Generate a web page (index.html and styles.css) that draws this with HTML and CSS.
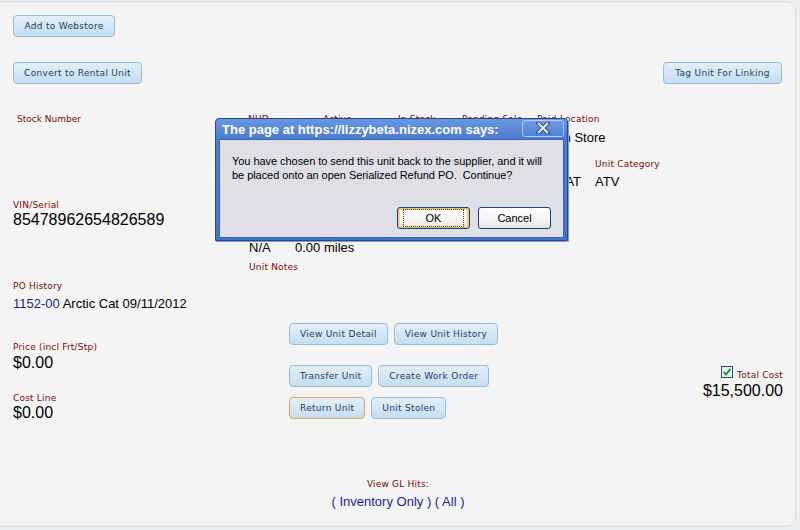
FILE: index.html
```html
<!DOCTYPE html>
<html lang="en">
<head>
<meta charset="UTF-8">
<title>Unit Detail</title>
<link rel="stylesheet" href="styles.css">
</head>
<body>

<div class="panel">
    <div class="row-top">
        <button class="btn">Add to Webstore</button>
    </div>

    <div class="row-tools">
        <button class="btn">Convert to Rental Unit</button>
        <button class="btn">Tag Unit For Linking</button>
    </div>

    <div class="main">
        <div class="col-left">
            <div class="lbl stock-lbl">Stock Number</div>
            <div class="lbl vin-lbl">VIN/Serial</div>
            <div class="big">85478962654826589</div>
            <div class="lbl po-lbl">PO History</div>
            <div class="val"><a class="link" href="#">1152-00</a> Arctic Cat 09/11/2012</div>
            <div class="lbl price-lbl">Price (incl Frt/Stp)</div>
            <div class="big">$0.00</div>
            <div class="lbl cost-lbl">Cost Line</div>
            <div class="big">$0.00</div>
        </div>

        <div class="col-mid">
            <!-- most of these cells sit under the alert box -->
            <div class="info info-1">
                <div class="lbl">NUD</div>
                <div class="lbl">Active</div>
                <div class="lbl">In Stock</div>
                <div class="lbl">Pending Sale</div>
                <div class="lbl">Paid</div>
                <div class="lbl">Location</div>
                <div class="val"></div>
                <div class="val"></div>
                <div class="val"></div>
                <div class="val"></div>
                <div class="val"></div>
                <div class="val">In Store</div>
            </div>

            <div class="info info-2">
                <div class="lbl"></div>
                <div class="lbl"></div>
                <div class="lbl"></div>
                <div class="lbl"></div>
                <div class="lbl">Unit Category</div>
                <div class="val"></div>
                <div class="val"></div>
                <div class="val"></div>
                <div class="val">ARCTIC CAT</div>
                <div class="val">ATV</div>
            </div>

            <div class="info info-3">
                <div class="lbl"></div>
                <div class="lbl"></div>
                <div class="val">N/A</div>
                <div class="val">0.00 miles</div>
            </div>

            <div class="lbl notes-lbl">Unit Notes</div>

            <div class="actions">
                <div class="btn-row">
                    <button class="btn">View Unit Detail</button>
                    <button class="btn">View Unit History</button>
                </div>
                <div class="btn-row row-2">
                    <button class="btn">Transfer Unit</button>
                    <button class="btn">Create Work Order</button>
                </div>
                <div class="btn-row row-3">
                    <button class="btn btn-focus">Return Unit</button>
                    <button class="btn">Unit Stolen</button>
                </div>
            </div>
        </div>

        <div class="col-right">
            <div class="total-head">
                <span class="check">
                    <svg width="10" height="10" viewBox="0 0 10 10"><path d="M1.5 5 L4 7.5 L8.5 2" fill="none" stroke="#2f9a2f" stroke-width="2"/></svg>
                </span>
                <span class="lbl">Total Cost</span>
            </div>
            <div class="big">$15,500.00</div>
        </div>
    </div>

    <div class="gl">
        <div class="lbl">View GL Hits:</div>
        <div class="gl-links"><a class="link" href="#">( Inventory Only )</a> <a class="link" href="#">( All )</a></div>
    </div>

    <div class="dialog">
        <div class="dlg-title">
            <span>The page at https://lizzybeta.nizex.com says:</span>
            <span class="dlg-close">
                <svg width="14" height="12" viewBox="0 0 14 12"><path d="M2 1 L12 11 M12 1 L2 11" stroke="#2d55a8" stroke-width="4" stroke-linecap="square"/><path d="M2 1 L12 11 M12 1 L2 11" stroke="#e8ecf8" stroke-width="2"/></svg>
            </span>
        </div>
        <div class="dlg-body">
            <p class="dlg-msg">You have chosen to send this unit back to the supplier, and it will<br>be placed onto an open Serialized Refund PO.&nbsp; Continue?</p>
            <div class="dlg-buttons">
                <button class="dlg-btn dlg-ok"><span>OK</span></button>
                <button class="dlg-btn">Cancel</button>
            </div>
        </div>
    </div>
</div>

</body>
</html>
```

FILE: styles.css
```css
body {
    margin: 0;
    background-color: #eceff2;
    font-family: "Liberation Sans", Arial, sans-serif;
    color: #000;
}
.panel {
    position: relative;
    box-sizing: border-box;
    width: 804px;
    height: 526px;
    margin: 1px 0 0 -8px;
    padding: 13px 12px 0 20px;
    background-color: #f4f4f4;
    border: 1px solid #d8dfe5;
    border-radius: 10px;
}
.btn {
    height: 22px;
    padding: 0 10px;
    font-family: "DejaVu Sans", Verdana, sans-serif;
    font-size: 9px;
    letter-spacing: 0.3px;
    color: #1d4068;
    background: linear-gradient(#e4eff9, #d2e4f5 60%, #c7ddf1);
    border: 1px solid #93bde0;
    border-radius: 4px;
    box-sizing: border-box;
}
.btn-focus {
    border-color: #e8a058;
}
.lbl {
    font-family: "DejaVu Sans", Verdana, sans-serif;
    font-size: 9px;
    line-height: 12px;
    letter-spacing: 0.2px;
    color: #7a0a0a;
    white-space: nowrap;
}
.val {
    font-size: 13px;
    line-height: 16px;
    white-space: nowrap;
}
.big {
    font-size: 16px;
    line-height: 18px;
    white-space: nowrap;
}
.link {
    color: #1c1c9c;
    text-decoration: none;
}

/* top rows */
.row-top .btn {
    width: 102px;
}
.row-tools {
    display: flex;
    justify-content: space-between;
    margin-top: 25px;
}
.row-tools .btn:first-child {
    width: 129px;
}
.row-tools .btn:last-child {
    width: 119px;
    margin-right: 1px;
}

/* main area */
.main {
    display: grid;
    grid-template-columns: 235px 1fr auto;
    margin-top: 29px;
}
.stock-lbl {
    padding-left: 4px;
    letter-spacing: 0;
}
.vin-lbl {
    margin-top: 74px;
}
.po-lbl {
    margin-top: 51px;
    margin-bottom: 4px;
}
.price-lbl {
    margin-top: 29px;
    margin-bottom: 1px;
}
.cost-lbl {
    margin-top: 20px;
}

.info {
    display: grid;
    row-gap: 5px;
}
.info-1 {
    grid-template-columns: 75px 75px 64px 75px 23px auto;
}
.info-2 {
    grid-template-columns: 75px 75px 106px 91px auto;
    margin-top: 12px;
    row-gap: 4px;
}
.info-3 {
    grid-template-columns: 46px auto;
    margin-top: 34px;
    row-gap: 4px;
}
.info .lbl:empty {
    height: 12px;
}
.info .val:empty {
    height: 16px;
}
.info-3 .val {
    padding-left: 1px;
}
.notes-lbl {
    margin-top: 5px;
    padding-left: 1px;
}
.actions {
    margin: 50px 0 0 41px;
}
.btn-row {
    display: flex;
    gap: 6px;
}
.row-2 {
    margin-top: 20px;
}
.row-3 {
    margin-top: 10px;
}

.col-right {
    padding-top: 253px;
    text-align: right;
}
.total-head {
    display: flex;
    align-items: flex-end;
    justify-content: flex-end;
    gap: 4px;
}
.check {
    display: flex;
    align-items: center;
    justify-content: center;
    width: 10px;
    height: 10px;
    border: 1px solid #2c4c78;
    background-color: #f0f4f8;
    margin-bottom: 3px;
}
.total-head .lbl {
    line-height: 12px;
}
.col-right .big {
    margin-top: 1px;
}

/* gl hits */
.gl {
    margin-top: 56px;
    text-align: center;
}
.gl-links {
    margin-top: 4px;
    font-size: 13px;
    line-height: 16px;
}

/* alert dialog */
.dialog {
    position: absolute;
    left: 222px;
    top: 116px;
    width: 353px;
    height: 123px;
    box-sizing: border-box;
    padding: 0 3px 3px;
    background: linear-gradient(#6a97de, #4b7bd0 20px, #4474c8);
    border: 1px solid #24489a;
    border-radius: 4px 4px 0 0;
    box-shadow: 1px 1px 0 #8c9cc0;
}
.dlg-title {
    display: flex;
    justify-content: space-between;
    align-items: center;
    height: 20px;
    padding-left: 3px;
    font-size: 13px;
    font-weight: bold;
    color: #fff;
    white-space: nowrap;
}
.dlg-close {
    display: flex;
    align-items: center;
    justify-content: center;
    width: 40px;
    height: 15px;
    margin-top: -2px;
    background: linear-gradient(#6e9be2, #4f80d4);
    border: 1px solid #b6c9ee;
    border-radius: 3px;
}
.dlg-body {
    height: 99px;
    box-sizing: border-box;
    padding: 14px 12px 0;
    background-color: #dfdfe7;
    border: 1px solid #3a64b8;
}
.dlg-msg {
    margin: 0;
    font-size: 11px;
    line-height: 14px;
    letter-spacing: -0.05px;
}
.dlg-buttons {
    display: flex;
    justify-content: flex-end;
    gap: 8px;
    margin-top: 25px;
}
.dlg-btn {
    width: 73px;
    height: 22px;
    padding: 0;
    font-family: "Liberation Sans", Arial, sans-serif;
    font-size: 11px;
    color: #000;
    background: linear-gradient(#fefefe, #f2f2f0 70%, #e2e2dc);
    border: 1px solid #1c3f80;
    border-radius: 3px;
}
.dlg-ok {
    box-shadow: inset 0 0 0 1px #f0c060, inset 0 0 0 2px #f6d890;
}
.dlg-ok span {
    display: inline-block;
    padding: 2px 22px;
    outline: 1px dotted #444;
}
```
